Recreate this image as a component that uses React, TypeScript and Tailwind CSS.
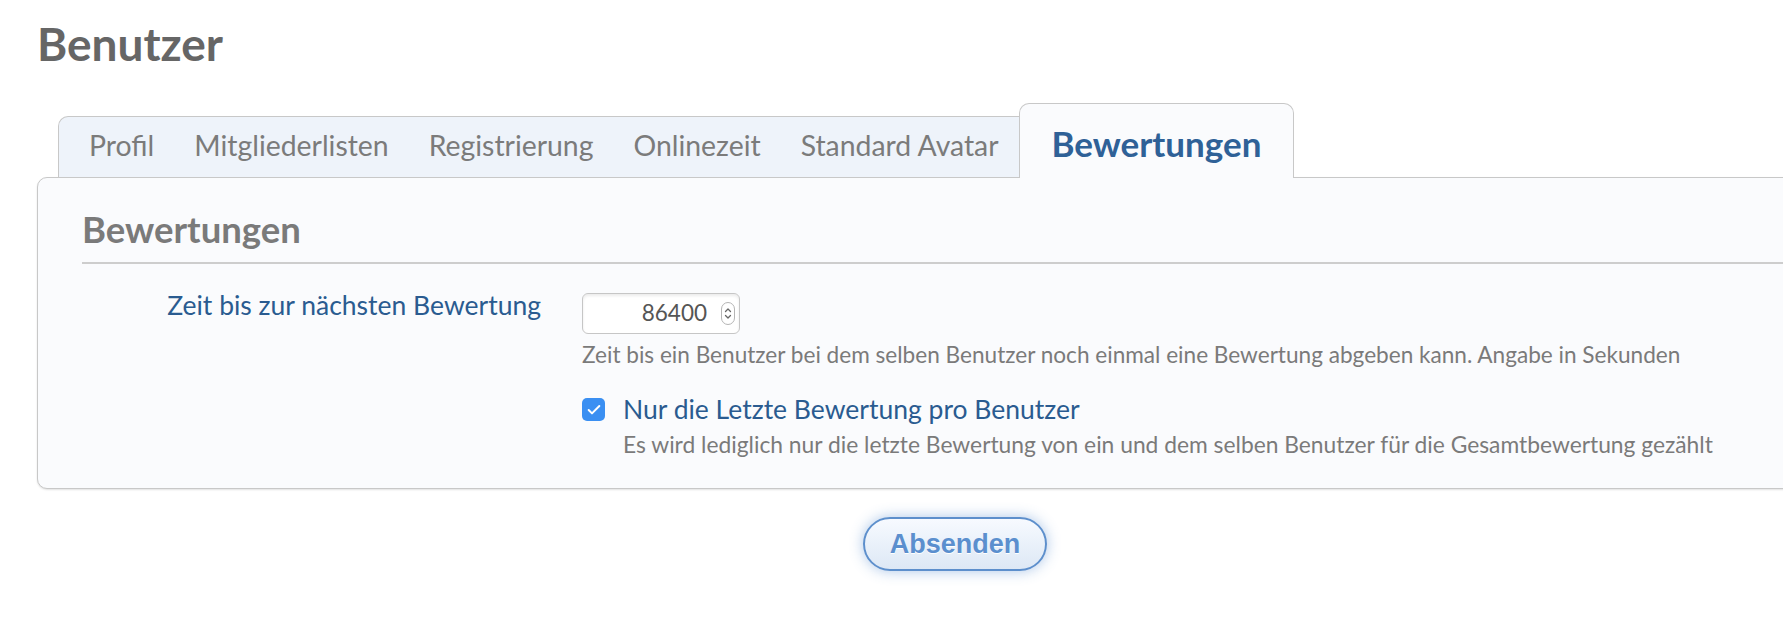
import { Check } from "lucide-react";

const TABS = ["Profil", "Mitgliederlisten", "Registrierung", "Onlinezeit", "Standard Avatar"];

function NumberSpinner() {
  return (
    <span className="flex h-[23px] w-[14px] flex-col items-center justify-center rounded-full border border-[#b5b5b5] bg-white">
      <svg viewBox="0 0 10 16" className="h-[17px] w-[10px]" fill="none" stroke="#666" strokeWidth="1.3" strokeLinecap="round" strokeLinejoin="round">
        <path d="M2.5 6 L5 3.5 L7.5 6" />
        <path d="M2.5 10 L5 12.5 L7.5 10" />
      </svg>
    </span>
  );
}

export default function App() {
  return (
    <div className="h-[638px] w-[1783px] overflow-hidden bg-white font-['Lato','Open_Sans',sans-serif]">
      <div className="ml-[37px] w-[1836px] pt-[21px]">
        {/* page title */}
        <h1 className="h-[46px] text-[46px] font-bold leading-none text-[#666666]">Benutzer</h1>

        {/* tab row */}
        <div className="mt-[36px] flex items-end pl-[21px]">
          <div className="flex h-[61px] items-start rounded-tl-[10px] border-l border-t border-[#c8c8c8] bg-[#eef3fa] pl-[10px] pt-[14px]">
            {TABS.map((tab) => (
              <span key={tab} className="px-5 text-[28.4px] leading-none text-[#7b7b7b]">
                {tab}
              </span>
            ))}
          </div>
          <div className="relative z-10 -mb-px h-[75px] rounded-t-[10px] border border-b-0 border-[#c8c8c8] bg-[#fafbfd] px-[32px] pt-[22px]">
            <span className="text-[35px] font-bold leading-none text-[#2f6197]">Bewertungen</span>
          </div>
        </div>

        {/* panel */}
        <div className="rounded-[10px] border border-[#c8c8c8] bg-[#fafbfd] pb-[33px] pl-[44px] pt-[33px] shadow-[0_1px_2px_rgba(0,0,0,0.12)]">
          <h2 className="border-b-2 border-[#cdcdcd] pb-[14px] text-[36.5px] font-bold leading-none text-[#7a7a7a]">
            Bewertungen
          </h2>

          <div className="mt-[29px] flex">
            <label className="-mt-px w-[459px] shrink-0 text-right text-[26.5px] leading-none text-[#2a5b90]">
              Zeit bis zur nächsten Bewertung
            </label>
            <div className="ml-[41px] flex flex-col">
              <div className="flex h-[41px] w-[158px] items-center justify-end rounded-[6px] border border-[#c6c6c6] bg-white pr-[4px] shadow-[inset_0_2px_3px_rgba(0,0,0,0.08)]">
                <span className="text-[22.5px] leading-none text-[#555555]">86400</span>
                <span className="ml-[14px]">
                  <NumberSpinner />
                </span>
              </div>
              <p className="mt-[10px] text-[22.6px] leading-none text-[#7a7a7a]">
                Zeit bis ein Benutzer bei dem selben Benutzer noch einmal eine Bewertung abgeben kann. Angabe in Sekunden
              </p>

              <div className="mt-[30px] flex items-start">
                <span className="mt-[2px] flex h-[23px] w-[23px] items-center justify-center rounded-[5px] bg-[#3a8ff2]">
                  <Check className="h-[16px] w-[16px] text-white" strokeWidth={3} />
                </span>
                <span className="ml-[18px] text-[26.5px] leading-none text-[#2a5b90]">
                  Nur die Letzte Bewertung pro Benutzer
                </span>
              </div>
              <p className="ml-[41px] mt-[10px] text-[22.8px] leading-none text-[#7a7a7a]">
                Es wird lediglich nur die letzte Bewertung von ein und dem selben Benutzer für die Gesamtbewertung gezählt
              </p>
            </div>
          </div>
        </div>

        {/* submit */}
        <div className="mt-[28px] flex justify-center">
          <button className="h-[54px] w-[184px] rounded-full border-2 border-[#5d8fcc] bg-gradient-to-b from-[#f7faff] to-[#dde8f5] font-['Liberation_Sans',Arial,sans-serif] text-[27px] font-bold text-[#5b8fce] shadow-[0_0_14px_rgba(74,130,205,0.45)] [text-shadow:0_1px_0_#ffffff]">
            Absenden
          </button>
        </div>
      </div>
    </div>
  );
}
